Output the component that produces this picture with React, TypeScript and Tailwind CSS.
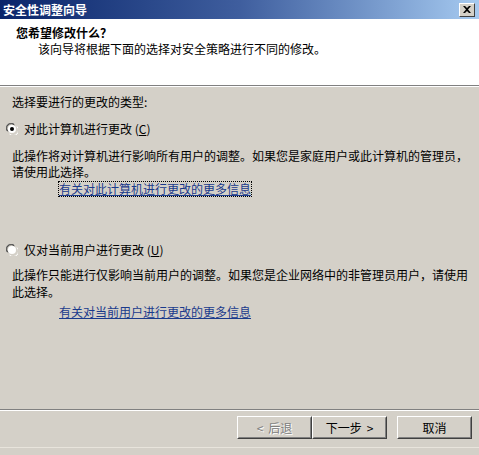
import React from 'react';

const font = { fontFamily: '"Noto Sans CJK SC", "Liberation Sans", sans-serif' };

function Radio({ checked }: { checked?: boolean }) {
    return (
        <svg width="12" height="12" viewBox="0 0 12 12" className="shrink-0">
            <path d="M1 8 A5 5 0 0 1 8 1" stroke="#808080" fill="none" />
            <path d="M2 8.5 A4 4 0 0 1 8.5 2" stroke="#404040" fill="none" />
            <path d="M3.5 11 A5 5 0 0 0 11 3.5" stroke="#ffffff" fill="none" />
            <circle cx="6" cy="6" r="4" fill="#ffffff" />
            {checked && <circle cx="6" cy="6" r="2" fill="#000000" />}
        </svg>
    );
}

function Button({ children, disabled }: { children: React.ReactNode; disabled?: boolean }) {
    return (
        <div className="h-[23px] border border-t-white border-l-white border-r-[#404040] border-b-[#404040] bg-[#d4d0c8]">
            <div
                className={`h-full flex items-center justify-center gap-[5px] border border-transparent border-r-[#808080] border-b-[#808080] text-[12px] ${
                    disabled ? 'text-[#808080] [text-shadow:1px_1px_0_#fff]' : 'text-black'
                }`}
            >
                {children}
            </div>
        </div>
    );
}

export default function App() {
    return (
        <div className="w-[479px] h-[455px] bg-[#d4d0c8] flex flex-col text-black select-none" style={font}>
            {/* title bar */}
            <div className="h-[19px] shrink-0 flex items-center justify-between pl-[3px] pr-[4px] bg-gradient-to-r from-[#0a246a] via-[#3f5e9e] to-[#a6caf0]">
                <span className="text-white font-bold text-[12px] leading-none">安全性调整向导</span>
                <div className="w-[16px] h-[14px] bg-[#d4d0c8] border border-t-white border-l-white border-r-[#404040] border-b-[#404040] flex items-center justify-center">
                    <svg width="8" height="7" viewBox="0 0 8 7">
                        <path d="M0 0 L2 0 L4 2 L6 0 L8 0 L5 3.5 L8 7 L6 7 L4 5 L2 7 L0 7 L3 3.5 Z" fill="#000" />
                    </svg>
                </div>
            </div>

            {/* header */}
            <div className="h-[67px] shrink-0 bg-white border-b border-[#808080] pt-[6px]">
                <div className="pl-[16px] font-bold text-[12px] leading-[16px]">您希望修改什么？</div>
                <div className="pl-[38px] text-[12px] leading-[16px]">该向导将根据下面的选择对安全策略进行不同的修改。</div>
            </div>
            <div className="h-px bg-white shrink-0" />

            {/* body */}
            <div className="flex-1 flex flex-col text-[12px] leading-[16px]">
                <div className="pl-[12px] mt-[7px]">选择要进行的更改的类型:</div>

                <div className="flex items-center gap-[6px] pl-[6px] mt-[11px]">
                    <Radio checked />
                    <span>对此计算机进行更改 (<span className="underline">C</span>)</span>
                </div>
                <div className="pl-[12px] pr-[10px] mt-[11px]">
                    此操作将对计算机进行影响所有用户的调整。如果您是家庭用户或此计算机的管理员，请使用此选择。
                </div>
                <div className="pl-[59px] mt-[2px] flex">
                    <span className="block leading-[14px] text-[#1a3a8c] underline outline outline-1 outline-dotted outline-black">
                        有关对此计算机进行更改的更多信息
                    </span>
                </div>

                <div className="flex items-center gap-[6px] pl-[6px] mt-[46px]">
                    <Radio />
                    <span>仅对当前用户进行更改 (<span className="underline">U</span>)</span>
                </div>
                <div className="pl-[12px] pr-[10px] mt-[8px] leading-[17px]">
                    此操作只能进行仅影响当前用户的调整。如果您是企业网络中的非管理员用户，请使用此选择。
                </div>
                <div className="pl-[59px] mt-[4px]">
                    <span className="text-[#1a3a8c] underline">有关对当前用户进行更改的更多信息</span>
                </div>

                <div className="flex-1" />
                <div className="h-px bg-[#808080]" />
                <div className="h-px bg-white" />

                <div className="flex pl-[237px] pt-[5px] pb-[8px]">
                    <div className="w-[75px]">
                        <Button disabled>
                            <span>&lt;</span>
                            <span>后退</span>
                        </Button>
                    </div>
                    <div className="w-[75px]">
                        <Button>
                            <span>下一步</span>
                            <span>&gt;</span>
                        </Button>
                    </div>
                    <div className="w-[75px] ml-[10px]">
                        <Button>取消</Button>
                    </div>
                </div>
                <div className="h-[8px] border-t border-[#e8e4dc]" />
            </div>
        </div>
    );
}
